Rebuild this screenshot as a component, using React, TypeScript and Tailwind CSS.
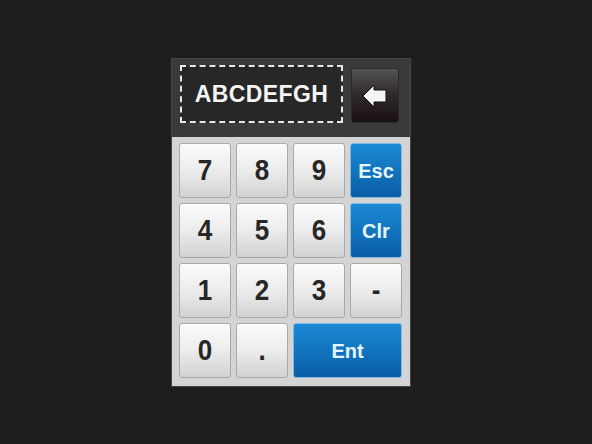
import React from 'react'

const numKey =
  'flex items-center justify-center rounded-[3px] border border-[#a9a9a9] bg-gradient-to-b from-[#fbfbfb] via-[#ececec] to-[#d2d2d2] text-[26px] font-bold text-[#262626] shadow-[inset_0_1px_0_#ffffff]'
const blueKey =
  'flex items-center justify-center rounded-[3px] border border-[#7fb8e0] bg-gradient-to-b from-[#1b8ad6] to-[#0a5ea6] text-[20px] font-bold text-[#e4f6ff]'

function BackArrow() {
  return (
    <svg width="24" height="22" viewBox="0 0 24 22">
      <path d="M0 11 L11 0 L11 5 L23 5 L23 17 L11 17 L11 22 Z" fill="#f4f4f4" stroke="#111" strokeWidth="1" />
    </svg>
  )
}

function NumKey({ label }: { label: string }) {
  return (
    <div className={numKey}>
      <span className="inline-block scale-y-[1.15]">{label}</span>
    </div>
  )
}

export default function App() {
  const rows: string[][] = [
    ['7', '8', '9'],
    ['4', '5', '6'],
    ['1', '2', '3', '-'],
  ]

  return (
    <div
      className="min-h-screen bg-[#1e1e1e] pl-[171px] pt-[58px]"
      style={{ fontFamily: '"Liberation Sans", Arial, sans-serif' }}
    >
      <div className="w-[240px] border border-[#454545]">
        {/* display */}
        <div className="flex h-[78px] items-start bg-[#3a3a3a] pl-[8px] pt-[6px]">
          <div className="flex h-[58px] w-[163px] items-center justify-center border-2 border-dashed border-[#e8e8e8] bg-[#272727] text-[23px] font-bold tracking-[0.4px] text-[#f4f4f4]">
            ABCDEFGH
          </div>
          <button className="ml-[8px] mt-[3px] flex h-[55px] w-[48px] items-center justify-center rounded-[3px] border border-[#2a2a2a] bg-gradient-to-b from-[#555555] via-[#2f2828] to-[#1a1212]">
            <BackArrow />
          </button>
        </div>

        {/* keypad */}
        <div className="grid grid-cols-[repeat(4,52px)] grid-rows-[repeat(4,55px)] gap-[5px] bg-[#d4d4d4] pb-[8px] pl-[7px] pr-[9px] pt-[6px]">
          {rows[0].map((k) => (
            <NumKey key={k} label={k} />
          ))}
          <div className={blueKey}>Esc</div>
          {rows[1].map((k) => (
            <NumKey key={k} label={k} />
          ))}
          <div className={blueKey}>Clr</div>
          {rows[2].map((k) => (
            <NumKey key={k} label={k} />
          ))}
          <NumKey label="0" />
          <NumKey label="." />
          <div className={`${blueKey} col-span-2`}>Ent</div>
        </div>
      </div>
    </div>
  )
}
